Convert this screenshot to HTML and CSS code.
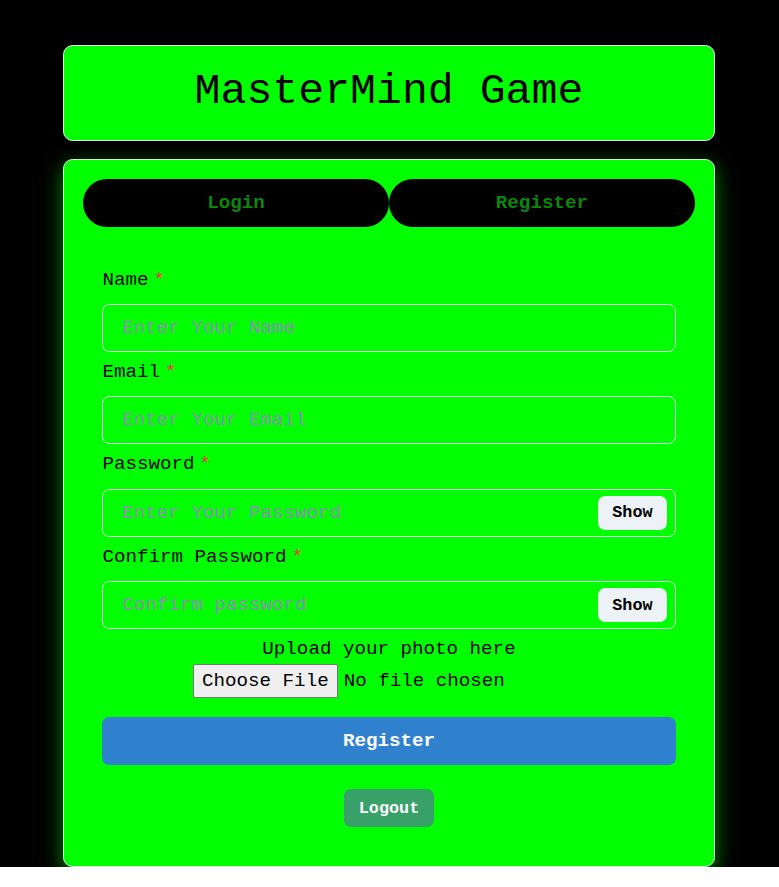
FILE: index.html
```html
<!DOCTYPE html>
<html lang="en">
<head>
<meta charset="utf-8">
<title>MasterMind Game</title>
<link rel="stylesheet" href="styles.css">
</head>
<body>
<div class="app">
  <div class="container">
    <div class="header">
      <h1 class="title">MasterMind Game</h1>
    </div>
    <div class="card">
      <div class="tabs">
        <button class="tab">Login</button>
        <button class="tab">Register</button>
      </div>
      <div class="panel">
        <form class="form">
          <div class="field">
            <label class="label">Name<span class="req">*</span></label>
            <input class="input" type="text" placeholder="Enter Your Name">
          </div>
          <div class="field">
            <label class="label">Email<span class="req">*</span></label>
            <input class="input" type="email" placeholder="Enter Your Email">
          </div>
          <div class="field">
            <label class="label">Password<span class="req">*</span></label>
            <div class="group">
              <input class="input input-pw" type="password" placeholder="Enter Your Password">
              <div class="right">
                <button type="button" class="show">Show</button>
              </div>
            </div>
          </div>
          <div class="field">
            <label class="label">Confirm Password<span class="req">*</span></label>
            <div class="group">
              <input class="input input-pw" type="password" placeholder="Confirm password">
              <div class="right">
                <button type="button" class="show">Show</button>
              </div>
            </div>
          </div>
          <div class="upload">
            <label class="upload-label">Upload your photo here</label>
            <input class="file" type="file" accept="image/*">
          </div>
          <button type="button" class="submit">Register</button>
        </form>
        <div class="logout-row">
          <button type="button" class="logout">Logout</button>
        </div>
      </div>
    </div>
  </div>
</div>
</body>
</html>
```

FILE: styles.css
```css
* {
  box-sizing: border-box;
}

html, body {
  margin: 0;
  padding: 0;
  background: #ffffff;
}

body {
  font-family: "Liberation Mono", "Courier New", monospace;
  font-size: 19.2px;
  line-height: 1.5;
  color: #000000;
}

.app {
  background: #000000;
  padding: 45px 1px 0 0;
}

.container {
  width: 652px;
  margin: 0 auto;
}

.header {
  background: #00ff00;
  border: 1.2px solid #e2e8f0;
  border-radius: 9.6px;
  padding: 14.4px;
  display: flex;
  justify-content: center;
  margin-bottom: 18.5px;
}

.title {
  margin: 0;
  font-size: 43.2px;
  font-weight: normal;
  line-height: 1.5;
  color: #000000;
}

.card {
  background: #00ff00;
  border: 1.2px solid #e2e8f0;
  border-radius: 9.6px;
  padding: 19.2px;
  box-shadow: 0 7px 20px rgba(0, 255, 0, 0.55);
}

.tabs {
  display: flex;
  margin-bottom: 19.2px;
}

.tab {
  flex: 1;
  height: 48px;
  border: none;
  border-radius: 9999px;
  background: #000000;
  color: #0a880a;
  font-family: inherit;
  font-size: 19.2px;
  font-weight: bold;
  padding: 0;
}

.panel {
  padding: 19.2px;
}

.form {
  display: flex;
  flex-direction: column;
  gap: 6px;
}

.label {
  display: block;
  line-height: 28.8px;
  margin-bottom: 9.6px;
}

.req {
  color: #e53e3e;
  margin-left: 4.8px;
}

.input {
  display: block;
  width: 100%;
  height: 48px;
  border: 1.2px solid #e2e8f0;
  border-radius: 7.2px;
  background: transparent;
  padding: 0 19.2px;
  font-family: inherit;
  font-size: 19.2px;
  color: #000000;
  outline: none;
}

.input::placeholder {
  color: #8d90b2;
}

.group {
  position: relative;
}

.input-pw {
  padding-right: 86.4px;
}

.right {
  position: absolute;
  top: 0;
  right: 0;
  width: 86.4px;
  height: 48px;
  display: flex;
  align-items: center;
  justify-content: center;
}

.show {
  height: 33.6px;
  padding: 0 14.4px;
  border: none;
  border-radius: 7.2px;
  background: #edf2f7;
  color: #000000;
  font-family: inherit;
  font-size: 16.8px;
  font-weight: bold;
}

.upload {
  display: flex;
  flex-direction: column;
  align-items: center;
}

.upload-label {
  display: block;
  line-height: 28.8px;
  text-align: center;
}

.file {
  width: 392px;
  height: 34px;
  font-family: inherit;
  font-size: 19.2px;
  color: #000000;
}

.file::file-selector-button {
  font-family: inherit;
  font-size: 19.2px;
  height: 34px;
  padding: 0 8px;
  margin-right: 6px;
  border: 1px solid #767676;
  border-radius: 2px;
  background: #efefef;
  color: #000000;
}

.submit {
  margin-top: 13px;
  height: 48px;
  width: 100%;
  border: none;
  border-radius: 7.2px;
  background: #3182ce;
  color: #ffffff;
  font-family: inherit;
  font-size: 19.2px;
  font-weight: bold;
}

.logout-row {
  display: flex;
  justify-content: center;
  margin-top: 24px;
}

.logout {
  height: 38.4px;
  padding: 0 14.4px;
  border: none;
  border-radius: 7.2px;
  background: #38a169;
  color: #ffffff;
  font-family: inherit;
  font-size: 16.8px;
  font-weight: bold;
}
```
